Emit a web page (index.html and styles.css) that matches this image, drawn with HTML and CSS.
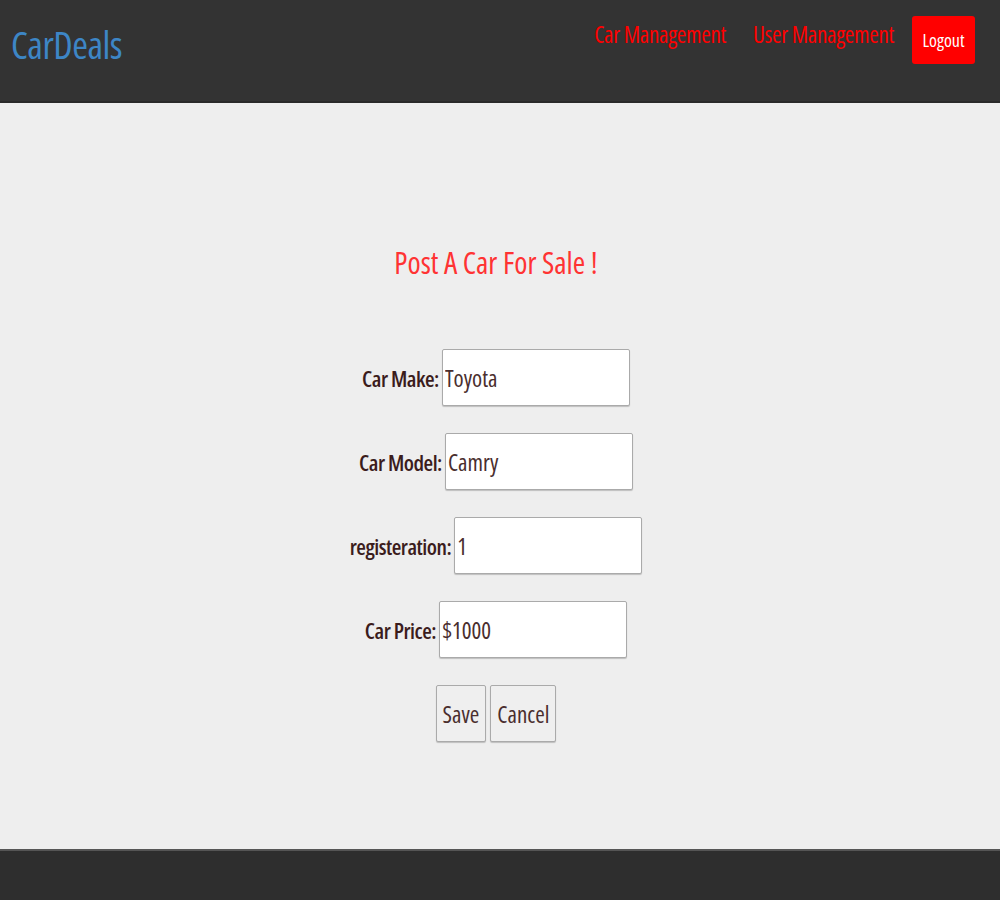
FILE: index.html
```html
<!DOCTYPE html>
<html>
<head>
<meta charset="utf-8">
<link rel="stylesheet" href="styles.css">
</head>
<body>
<header class="topbar">
  <div class="brand">CarDeals</div>
  <nav class="nav">
    <a class="nav-link" href="#">Car Management</a>
    <a class="nav-link" href="#">User Management</a>
    <button class="logout">Logout</button>
  </nav>
</header>
<main class="content">
  <h1 class="title">Post A Car For Sale !</h1>
  <form class="car-form">
    <div class="row"><label class="lbl">Car Make:</label><input class="field" type="text" value="Toyota"></div>
    <div class="row"><label class="lbl">Car Model:</label><input class="field" type="text" value="Camry"></div>
    <div class="row"><label class="lbl">registeration:</label><input class="field" type="text" value="1"></div>
    <div class="row"><label class="lbl">Car Price:</label><input class="field" type="text" value="$1000"></div>
    <div class="actions"><button type="button" class="btn">Save</button><button type="button" class="btn">Cancel</button></div>
  </form>
</main>
<footer class="footer"></footer>
</body>
</html>
```
FILE: styles.css
```css
html, body {
  margin: 0;
  padding: 0;
  height: 100%;
}
body {
  background: #eeeeee;
  font-family: "Open Sans", "DejaVu Sans", sans-serif;
  font-stretch: 75%;
  display: flex;
  flex-direction: column;
  min-height: 900px;
}
.topbar {
  background: #333333;
  height: 101px;
  border-bottom: 2px solid #2a2a2a;
  display: flex;
  justify-content: space-between;
  align-items: flex-start;
  padding: 0 25px 0 11px;
}
.brand {
  color: #3d86c6;
  font-size: 38px;
  margin-top: 18px;
  letter-spacing: -0.5px;
}
.nav {
  display: flex;
  align-items: flex-start;
  margin-top: 16px;
}
.nav-link {
  color: #ff0000;
  text-decoration: none;
  font-size: 23px;
  margin-top: 2px;
  margin-right: 27px;
  letter-spacing: -0.3px;
}
.nav-link + .nav-link {
  margin-right: 18px;
}
.logout {
  background: #ff0000;
  color: #fff;
  border: none;
  border-radius: 3px;
  width: 63px;
  height: 48px;
  font-family: inherit;
  font-stretch: 75%;
  font-size: 18px;
  padding: 0;
}
.content {
  flex: 1;
  display: flex;
  flex-direction: column;
  align-items: center;
  padding-right: 8px;
}
.title {
  color: #ff3333;
  font-weight: normal;
  font-size: 30px;
  margin: 140px 0 0 0;
  line-height: 40px;
}
.car-form {
  margin-top: 66px;
  display: flex;
  flex-direction: column;
  align-items: center;
  gap: 27px;
}
.row {
  display: flex;
  align-items: center;
  gap: 3px;
}
.lbl {
  color: #3b1c1c;
  font-size: 22px;
  font-weight: 600;
  letter-spacing: -0.5px;
}
.field {
  width: 182px;
  height: 55px;
  box-sizing: content-box;
  padding: 0 2px;
  border: 1px solid #aaa;
  border-radius: 2px;
  box-shadow: 0 1px 1px rgba(0,0,0,0.2);
  background: #fff;
  font-family: inherit;
  font-stretch: 75%;
  font-size: 23px;
  color: #4a2e2e;
}
.actions {
  display: flex;
  gap: 4px;
}
.btn {
  height: 57px;
  padding: 0 6px;
  background: #efefef;
  border: 1px solid #aaa;
  border-radius: 2px;
  box-shadow: 0 1px 1px rgba(0,0,0,0.2);
  font-family: inherit;
  font-stretch: 75%;
  font-size: 23px;
  color: #4a2e2e;
}
.footer {
  height: 49px;
  background: #2e2e2e;
  border-top: 2px solid #555;
}
```
